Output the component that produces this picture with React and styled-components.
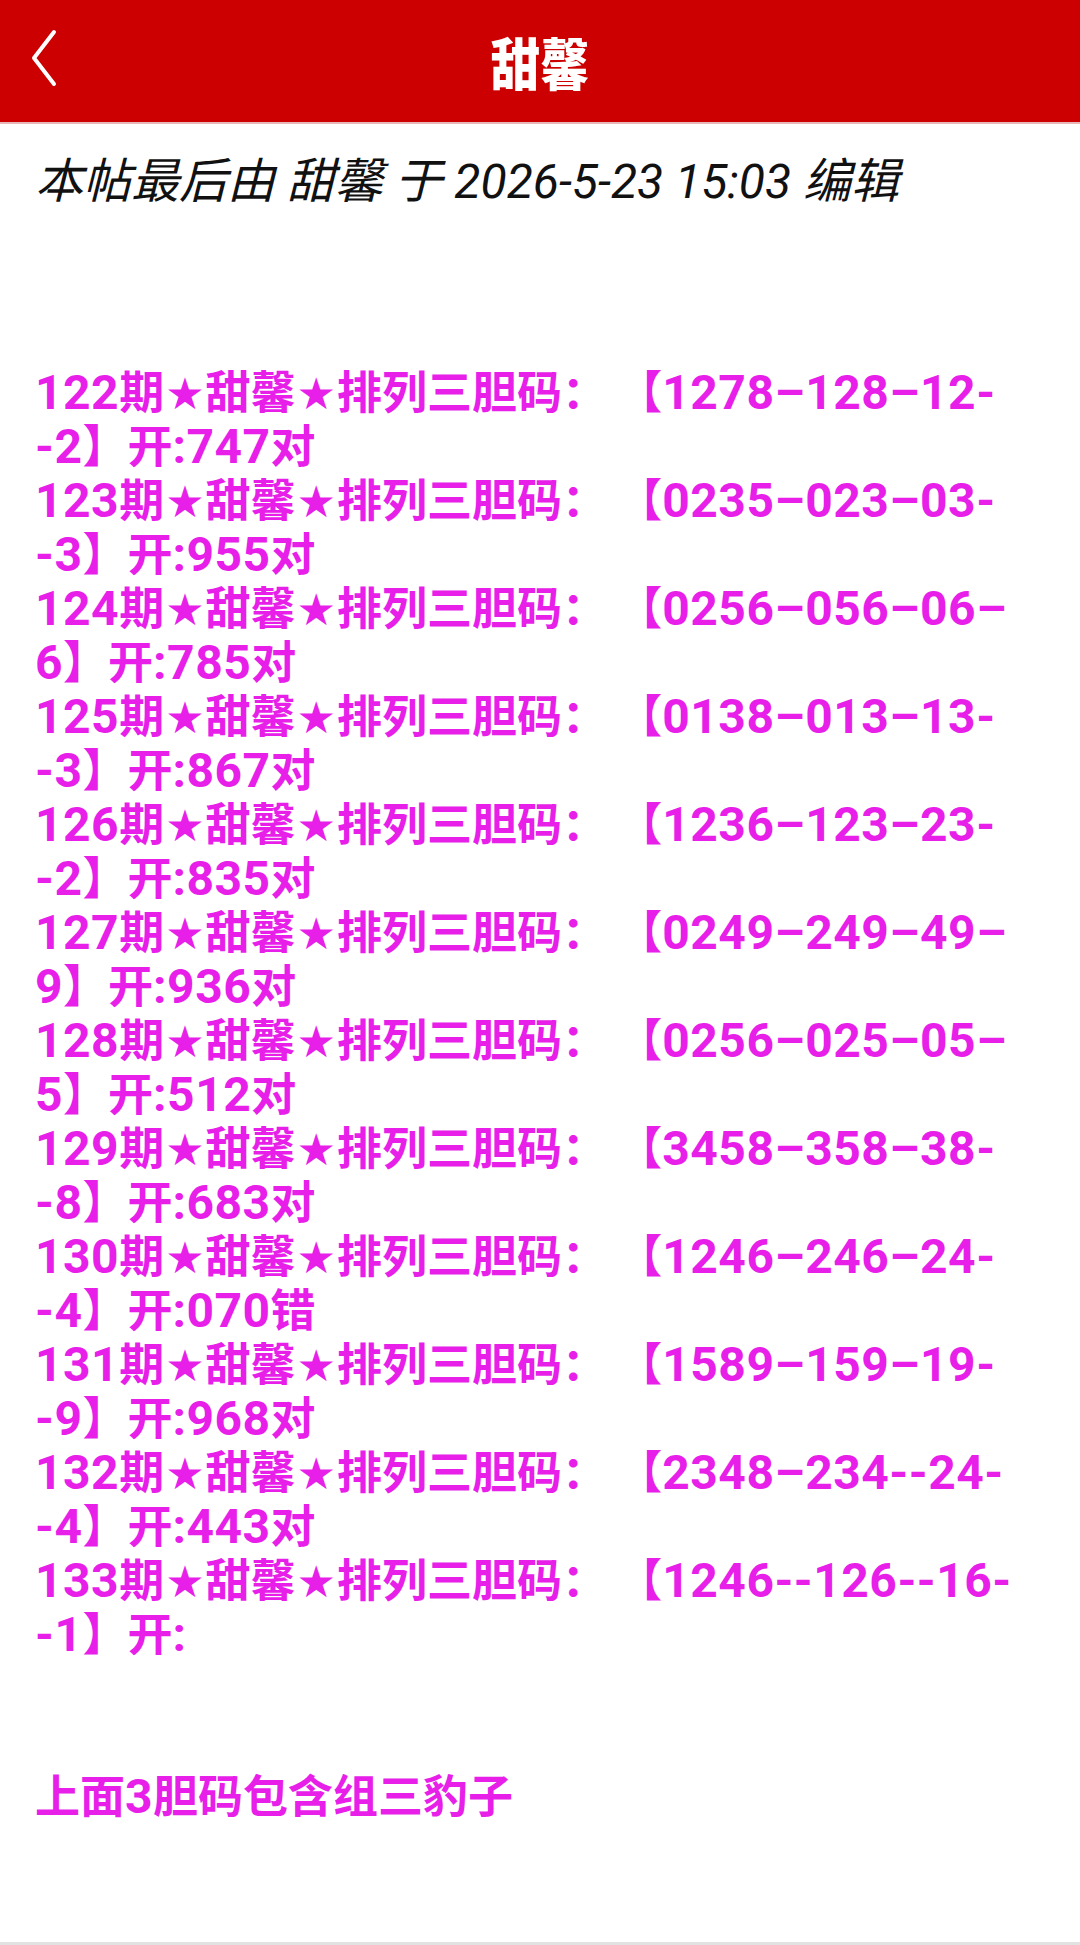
import React from 'react';
import styled, {createGlobalStyle} from 'styled-components';

const GlobalStyle = createGlobalStyle`
  html, body {
    margin: 0;
    padding: 0;
    background: #fff;
  }
  body {
    font-family: "Noto Sans CJK SC", "Noto Sans", sans-serif;
  }
`;

const Page = styled.div`
  width: 1080px;
  min-height: 1945px;
  background: #fff;
  box-sizing: border-box;
  border-bottom: 3px solid #e2e2e2;
`;

const Header = styled.header`
  height: 122px;
  background: #cc0000;
  display: flex;
  align-items: center;
  justify-content: center;
  position: relative;
  border-bottom: 2px solid #e8b8b8;
`;

const BackButton = styled.button`
  position: absolute;
  left: 22px;
  top: 26px;
  width: 44px;
  height: 64px;
  padding: 0;
  border: none;
  background: transparent;
  display: flex;
  align-items: center;
  justify-content: center;
`;

const Title = styled.h1`
  margin: 0;
  color: #fff;
  font-family: "Noto Sans CJK SC", sans-serif;
  font-weight: 900;
  font-size: 56px;
  line-height: 1;
  transform: scaleX(0.88);
`;

const Content = styled.main`
  padding: 28px 30px 0 35px;
`;

const EditNote = styled.p`
  margin: 0;
  font-family: "Roboto", "Noto Sans CJK SC", sans-serif;
  font-style: italic;
  font-size: 48px;
  line-height: 60px;
  color: #111;
`;

const Post = styled.div`
  margin-top: 151px;
  color: #e71fe9;
  font-family: "Noto Sans CJK SC", sans-serif;
  font-weight: 700;
  font-size: 45px;
  line-height: 54px;
  text-spacing-trim: space-all;
`;

const Line = styled.div`
  white-space: nowrap;
  height: 54px;
`;

const Num = styled.span`
  font-family: "Roboto", "Liberation Sans", sans-serif;
  font-weight: 700;
  font-size: 48px;
  letter-spacing: 0.5px;
  line-height: 54px;
`;

const Star = styled.span`
  font-family: "DejaVu Sans", sans-serif;
  font-size: 44px;
  line-height: 54px;
  margin: 0 1px;
`;

const Spacer = styled.div`
  height: ${p => p.$lines * 54}px;
`;

const records = [
  ['122', '1278–128–12-', '-2', '747对'],
  ['123', '0235–023–03-', '-3', '955对'],
  ['124', '0256–056–06–', '6', '785对'],
  ['125', '0138–013–13-', '-3', '867对'],
  ['126', '1236–123–23-', '-2', '835对'],
  ['127', '0249–249–49–', '9', '936对'],
  ['128', '0256–025–05–', '5', '512对'],
  ['129', '3458–358–38-', '-8', '683对'],
  ['130', '1246–246–24-', '-4', '070错'],
  ['131', '1589–159–19-', '-9', '968对'],
  ['132', '2348–234--24-', '-4', '443对'],
  ['133', '1246--126--16-', '-1', ''],
];

// digits and dashes come from a Latin font, stars from DejaVu, the rest from the CJK one
function Mixed({text}) {
  return text.split(/([0-9:\-–]+|★)/).map((part, i) => {
    if (part === '★') return <Star key={i}>★</Star>;
    if (/^[0-9:\-–]+$/.test(part)) return <Num key={i}>{part}</Num>;
    return part;
  });
}

function BackIcon() {
  return (
    <svg width="44" height="64" viewBox="0 0 44 64">
      <path d="M32 6 L12 32 L32 58" fill="none" stroke="#fff" strokeWidth="4" strokeLinecap="round" strokeLinejoin="round"/>
    </svg>
  );
}

export default function App() {
  return (
    <Page>
      <GlobalStyle/>
      <Header>
        <BackButton aria-label="返回"><BackIcon/></BackButton>
        <Title>甜馨</Title>
      </Header>
      <Content>
        <EditNote>本帖最后由 甜馨 于 2026-5-23 15:03 编辑</EditNote>
        <Post>
          {records.map(([issue, code, tail, result]) => (
            <React.Fragment key={issue}>
              <Line><Mixed text={`${issue}期★甜馨★排列三胆码： 【${code}`}/></Line>
              <Line><Mixed text={`${tail}】开:${result}`}/></Line>
            </React.Fragment>
          ))}
          <Spacer $lines={2}/>
          <Line><Mixed text="上面3胆码包含组三豹子"/></Line>
        </Post>
      </Content>
    </Page>
  );
}
